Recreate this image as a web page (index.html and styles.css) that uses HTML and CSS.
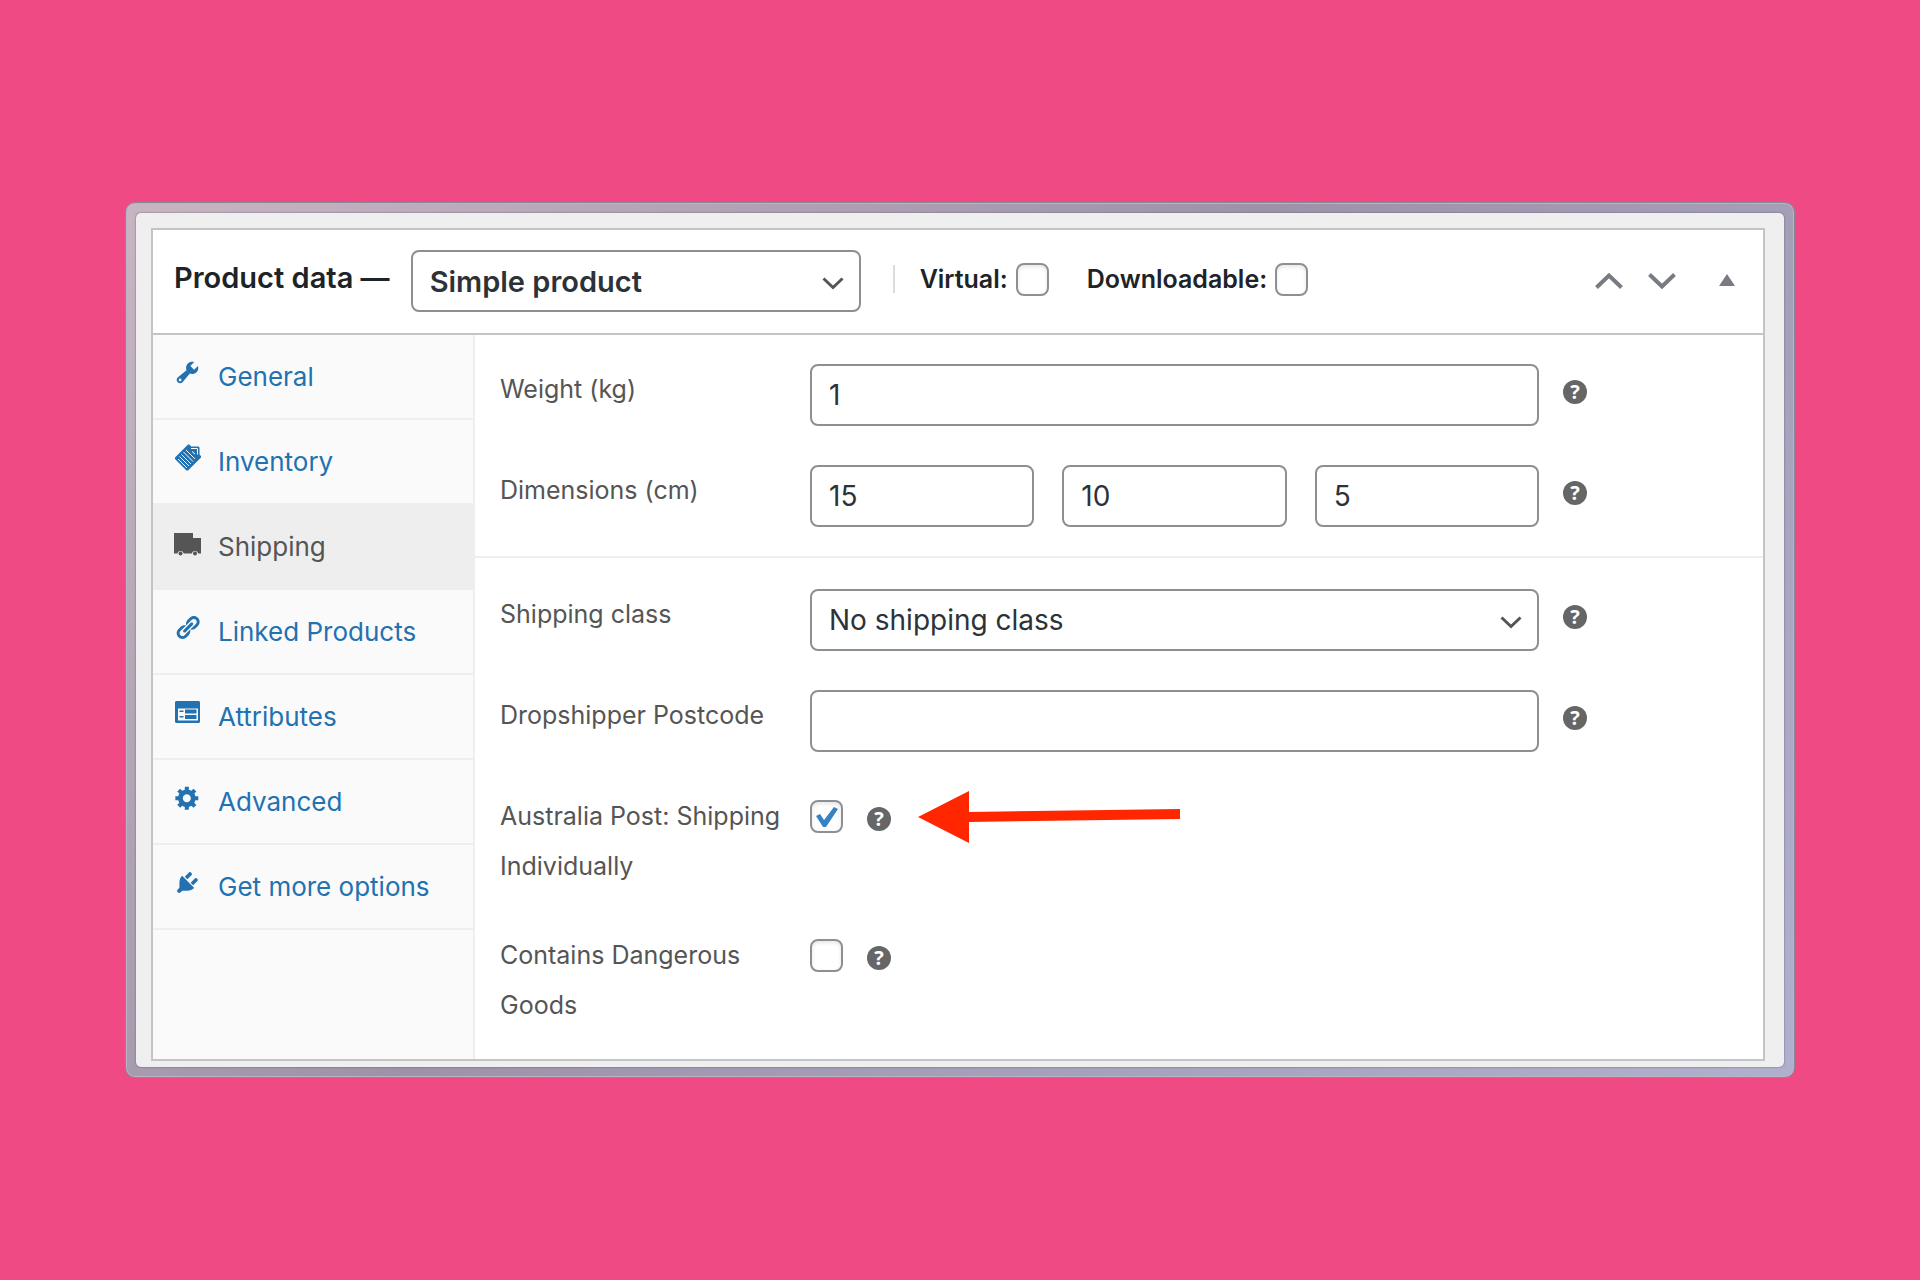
FILE: index.html
```html
<!DOCTYPE html>
<html lang="en">
<head>
    <meta charset="UTF-8">
    <meta name="viewport" content="width=device-width, initial-scale=1.0">
    <title>Product data</title>
    <link rel="stylesheet" href="styles.css">
</head>
<body>

    <div class="window">
        <div class="window-inner">
            <div class="panel">

                <!-- Panel header -->
                <div class="panel-header">
                    <h2>Product data —</h2>
                    <div class="select-wrap type-select">
                        <select aria-label="Product type">
                            <option>Simple product</option>
                        </select>
                        <svg class="chevron" viewBox="0 0 22 13"><path d="M1.5 1.5L11 10.5L20.5 1.5"/></svg>
                    </div>
                    <div class="type-options">
                        <label>Virtual: <input type="checkbox"></label>
                        <label>Downloadable: <input type="checkbox"></label>
                    </div>
                    <div class="handle-actions">
                        <button type="button" aria-label="Move up">
                            <svg width="28" height="16" viewBox="0 0 28 16"><path class="line" d="M1.5 14.5L14 2.5L26.5 14.5"/></svg>
                        </button>
                        <button type="button" aria-label="Move down">
                            <svg width="28" height="16" viewBox="0 0 28 16"><path class="line" d="M1.5 1.5L14 13.5L26.5 1.5"/></svg>
                        </button>
                        <button type="button" class="toggle" aria-label="Toggle panel">
                            <svg width="16" height="16" viewBox="0 0 16 16"><path d="M8 1L16 13H0z"/></svg>
                        </button>
                    </div>
                </div>

                <div class="panel-body">

                    <!-- Tabs -->
                    <ul class="tabs">
                        <li>
                            <a href="#general">
                                <svg viewBox="0 0 20 20"><path d="M16.68 9.77c-1.34 1.34-3.3 1.67-4.95.99l-5.41 6.52c-.99.99-2.59.99-3.58 0s-.99-2.59 0-3.57l6.52-5.42c-.68-1.65-.35-3.61.99-4.95 1.28-1.28 3.12-1.62 4.72-1.06l-2.89 2.89 2.82 2.82 2.86-2.87c.53 1.58.18 3.39-1.08 4.65zM3.81 16.21c.4.39 1.04.39 1.43 0 .4-.4.4-1.04 0-1.43-.39-.4-1.03-.4-1.43 0-.39.39-.39 1.03 0 1.43z"/></svg>
                                General
                            </a>
                        </li>
                        <li>
                            <a href="#inventory">
                                <svg viewBox="0 0 27 27">
                                    <path d="M14 0.5L1 13.5V15L12.5 26.5H14L27 13.5V12L25.5 10.5V3.5L24.5 2.5H17L15.5 0.5z"/>
                                    <path class="cut" d="M12 6L21 15M9.5 8L19 17.5M7.500 10.500L17 20M5.500 12.500L15 22M4 15L13 24"/>
                                    <path class="cut" d="M17 4.500H23.500V10.500M18 7.500L21 10"/>
                                </svg>
                                Inventory
                            </a>
                        </li>
                        <li class="active">
                            <a href="#shipping">
                                <svg viewBox="0 0 27 27">
                                    <path d="M0 4H19V9H27V24.5H24.2A3.3 3.3 0 0 0 17.8 24.5H9.7A3.3 3.3 0 0 0 3.3 24.5H0z"/>
                                    <circle cx="6.5" cy="24.5" r="2"/>
                                    <circle cx="21" cy="24.5" r="2"/>
                                </svg>
                                Shipping
                            </a>
                        </li>
                        <li>
                            <a href="#linked">
                                <svg viewBox="0 0 20 20"><path d="M17.74 2.76c1.68 1.69 1.68 4.41 0 6.1l-1.53 1.52c-1.12 1.12-2.7 1.47-4.14 1.09l2.62-2.61.76-.77.76-.76c.84-.84.84-2.2 0-3.04-.84-.85-2.2-.85-3.04 0l-.77.76-3.38 3.38c-.37-1.44-.02-3.02 1.1-4.14l1.52-1.53c1.69-1.68 4.42-1.68 6.1 0zM8.59 13.43l5.34-5.34c.42-.42.42-1.1 0-1.52-.44-.43-1.13-.39-1.53 0l-5.33 5.34c-.42.42-.42 1.1 0 1.52.44.43 1.13.39 1.52 0zm-.76 2.29l4.14-4.15c.38 1.44.03 3.02-1.09 4.14l-1.52 1.53c-1.69 1.68-4.41 1.68-6.1 0-1.68-1.68-1.68-4.42 0-6.1l1.53-1.52c1.12-1.12 2.7-1.47 4.14-1.1l-4.14 4.15c-.85.84-.85 2.2 0 3.05.84.84 2.2.84 3.04 0z"/></svg>
                                Linked Products
                            </a>
                        </li>
                        <li>
                            <a href="#attributes">
                                <svg viewBox="0 0 27 27">
                                    <path fill-rule="evenodd" d="M2 2H25L26 3V23L25 24H2L1 23V3zM4 9.5V21.5H24V9.5z"/>
                                    <path d="M5.5 11.5H9.5V13H5.5zM5.5 17H9.5V18.5H5.5zM11 10.5H22.5V14.5H11zM11 16H22.5V20H11z"/>
                                </svg>
                                Attributes
                            </a>
                        </li>
                        <li>
                            <a href="#advanced">
                                <svg viewBox="0 0 20 20"><path d="M18 12h-2.18c-.17.7-.44 1.35-.81 1.93l1.54 1.54-2.1 2.1-1.54-1.54c-.58.36-1.23.63-1.91.79V19H8v-2.18c-.68-.16-1.33-.43-1.91-.79l-1.54 1.54-2.12-2.12 1.54-1.54c-.36-.58-.63-1.23-.79-1.91H1V9.03h2.17c.16-.7.44-1.35.8-1.94L2.43 5.55l2.1-2.1 1.54 1.54c.58-.37 1.24-.64 1.93-.81V2h3v2.18c.68.16 1.33.43 1.91.79l1.54-1.54 2.12 2.12-1.54 1.54c.36.59.64 1.24.8 1.94H18V12zm-8.5 1.5c1.66 0 3-1.34 3-3s-1.34-3-3-3-3 1.34-3 3 1.34 3 3 3z"/></svg>
                                Advanced
                            </a>
                        </li>
                        <li>
                            <a href="#more">
                                <svg viewBox="0 0 20 20"><path d="M13.11 4.36L9.87 7.6 8 5.73l3.24-3.24c.35-.34 1.05-.2 1.56.32.52.51.66 1.21.31 1.55zm-8 1.77l.91-1.12 9.01 9.01-1.19.84c-.71.71-2.63 1.16-3.82 1.16H6.14L4.9 17.26c-.59.59-1.54.59-2.12 0-.59-.58-.59-1.53 0-2.12l1.24-1.24v-3.88c0-1.13.4-3.19 1.09-3.89zm7.26 3.97l3.24-3.24c.34-.35 1.04-.21 1.55.31.52.51.66 1.21.31 1.55l-3.24 3.25z"/></svg>
                                Get more options
                            </a>
                        </li>
                    </ul>

                    <!-- Shipping options -->
                    <div class="options">
                        <div class="options-group">
                            <div class="row">
                                <label for="weight">Weight (kg)</label>
                                <input type="text" id="weight" value="1">
                                <span class="help">?</span>
                            </div>
                            <div class="row">
                                <label for="length">Dimensions (cm)</label>
                                <div class="dimensions">
                                    <input type="text" id="length" value="15">
                                    <input type="text" aria-label="Width" value="10">
                                    <input type="text" aria-label="Height" value="5">
                                </div>
                                <span class="help">?</span>
                            </div>
                        </div>

                        <div class="options-group">
                            <div class="row">
                                <label for="shipping-class">Shipping class</label>
                                <div class="select-wrap">
                                    <select id="shipping-class">
                                        <option>No shipping class</option>
                                    </select>
                                    <svg class="chevron" viewBox="0 0 22 13"><path d="M1.5 1.5L11 10.5L20.5 1.5"/></svg>
                                </div>
                                <span class="help">?</span>
                            </div>
                            <div class="row">
                                <label for="postcode">Dropshipper Postcode</label>
                                <input type="text" id="postcode">
                                <span class="help">?</span>
                            </div>
                            <div class="row">
                                <label for="individually">Australia Post: Shipping Individually</label>
                                <div class="check">
                                    <input type="checkbox" id="individually" checked>
                                    <span class="help">?</span>
                                    <svg class="arrow" viewBox="0 0 262 52"><path d="M0 26L51 0V21L262 18V28L51 31V52z"/></svg>
                                </div>
                            </div>
                            <div class="row">
                                <label for="dangerous">Contains Dangerous Goods</label>
                                <div class="check">
                                    <input type="checkbox" id="dangerous">
                                    <span class="help">?</span>
                                </div>
                            </div>
                        </div>
                    </div>

                </div>
            </div>
        </div>
    </div>

</body>
</html>
```
FILE: styles.css
```css
* {
    box-sizing: border-box;
}

body {
    margin: 0;
    min-height: 100vh;
    padding: 0 125px;
    display: flex;
    align-items: center;
    background-color: #f04a84;
    color: #1d2327;
    font-family: Inter, "Liberation Sans", sans-serif;
    font-size: 25px;
}

/* Window frame */
.window {
    flex: 1;
    padding: 10px;
    border: 1px solid #8d8598;
    border-radius: 10px;
    background: linear-gradient(135deg, #c8b5c2 0%, #9d93a9 45%, #b0b0ce 100%);
    box-shadow: inset 0 0 0 1px #b9b4c4;
}

.window-inner {
    padding: 15px 19px 6px 15px;
    border-radius: 5px;
    background-color: #efefef;
    box-shadow: 0 0 2px #5f5970;
}

.panel {
    border: 2px solid #c3c4c7;
    background-color: #fff;
}

/* Panel header */
.panel-header {
    display: flex;
    align-items: flex-start;
    padding: 20px 28px 21px 21px;
    border-bottom: 2px solid #c3c4c7;
}

.panel-header h2 {
    margin: 0 21px 0 0;
    font-size: 29px;
    font-weight: 600;
    line-height: 56px;
}

.type-select {
    width: 450px;
}

.type-options {
    display: flex;
    align-items: center;
    gap: 38px;
    height: 28px;
    margin: 15px 0 0 32px;
    padding-left: 25px;
    border-left: 2px solid #dcdcde;
}

.type-options label {
    display: flex;
    align-items: center;
    gap: 8px;
    font-weight: 600;
}

.type-options input {
    margin-bottom: 4px;
}

.handle-actions {
    display: flex;
    align-items: center;
    gap: 25px;
    height: 62px;
    margin-left: auto;
}

.handle-actions button {
    padding: 0;
    border: none;
    background: none;
    cursor: pointer;
}

.handle-actions .toggle {
    margin-left: 18px;
}

.handle-actions svg {
    display: block;
    fill: #787c82;
}

.handle-actions .line {
    fill: none;
    stroke: #787c82;
    stroke-width: 4;
}

/* Form controls */
input[type="text"],
select {
    width: 100%;
    height: 62px;
    padding: 0 17px;
    border: 2px solid #8c8f94;
    border-radius: 8px;
    background-color: #fff;
    color: #2c3338;
    font-family: inherit;
    font-size: 28px;
}

select {
    appearance: none;
}

.type-select select {
    font-size: 29px;
    font-weight: 600;
}

.select-wrap {
    position: relative;
}

.chevron {
    position: absolute;
    top: 27px;
    right: 17px;
    width: 22px;
    height: 13px;
    fill: none;
    stroke: #555;
    stroke-width: 3;
    pointer-events: none;
}

input[type="checkbox"] {
    appearance: none;
    flex: none;
    width: 33px;
    height: 33px;
    margin: 0;
    border: 2px solid #8c8f94;
    border-radius: 8px;
    background-color: #fff;
    box-shadow: inset 0 2px 4px rgba(0, 0, 0, 0.1);
}

input[type="checkbox"]:checked {
    background-image: url("data:image/svg+xml,%3Csvg xmlns='http://www.w3.org/2000/svg' viewBox='0 0 29 29'%3E%3Cpath d='M4 14L8 12L12 18L22 5L26 7L14 25H11z' fill='%233582c4'/%3E%3C/svg%3E");
}

/* Tabs */
.panel-body {
    display: flex;
}

.tabs {
    flex: none;
    width: 322px;
    margin: 0;
    padding: 0;
    border-right: 2px solid #eee;
    background-color: #fafafa;
    list-style: none;
}

.tabs a {
    display: flex;
    align-items: center;
    gap: 17px;
    height: 85px;
    padding-left: 21px;
    border-bottom: 2px solid #eee;
    color: #2271b1;
    font-size: 26px;
    text-decoration: none;
}

.tabs svg {
    width: 27px;
    height: 27px;
    margin-bottom: 8px;
    fill: currentColor;
}

.tabs .cut {
    fill: none;
    stroke: #fafafa;
    stroke-width: 1;
}

.tabs .active a {
    background-color: #eee;
    color: #555;
}

/* Option rows */
.options {
    flex: 1;
}

.options-group {
    display: flex;
    flex-direction: column;
    gap: 39px;
    padding: 29px 176px 29px 25px;
    border-bottom: 2px solid #eee;
}

.options-group:last-child {
    padding-top: 31px;
    border-bottom: none;
}

.row {
    display: grid;
    grid-template-columns: 286px 1fr 24px;
    column-gap: 24px;
    align-items: start;
}

.row > label {
    color: #555;
    line-height: 50px;
}

.dimensions {
    display: grid;
    grid-template-columns: repeat(3, 1fr);
    gap: 28px;
}

.check {
    display: flex;
    align-items: flex-start;
    gap: 24px;
}

.check input {
    margin-top: 9px;
}

.help {
    flex: none;
    width: 24px;
    height: 24px;
    margin-top: 16px;
    border-radius: 50%;
    background-color: #666;
    color: #fff;
    font-family: "Open Sans", sans-serif;
    font-size: 20px;
    font-weight: 700;
    line-height: 24px;
    text-align: center;
}

.arrow {
    width: 262px;
    height: 52px;
    margin-left: 3px;
    fill: #ff2600;
}
```
